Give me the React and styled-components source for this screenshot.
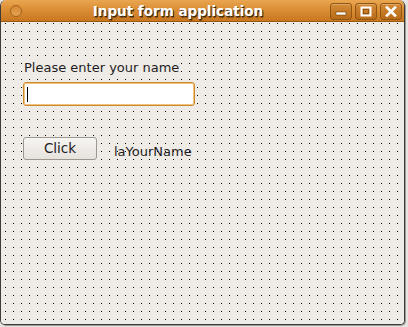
import React from 'react';
import styled, { createGlobalStyle } from 'styled-components';

const GlobalStyle = createGlobalStyle`
  html, body {
    margin: 0;
    padding: 0;
    background: #e6e4e1;
    width: 408px;
    height: 327px;
    overflow: hidden;
  }
  * {
    box-sizing: border-box;
  }
`;

const Window = styled.div`
  width: 405px;
  height: 325px;
  display: flex;
  flex-direction: column;
  border: 1px solid #3c3b37;
  border-top: none;
  border-radius: 6px 6px 5px 5px;
  overflow: hidden;
  background: #efebe7;
  box-shadow: 1px 1px 0 #9c9a96;
`;

const TitleBar = styled.div`
  height: 22px;
  flex-shrink: 0;
  display: flex;
  align-items: center;
  padding: 0 2px 0 9px;
  background: linear-gradient(#e9a650 0%, #dd9138 40%, #c8771f 100%);
  border-bottom: 1px solid #9a5a12;
  font-family: "DejaVu Sans", sans-serif;
`;

const MenuCircle = styled.div`
  width: 12px;
  height: 12px;
  border-radius: 50%;
  border: 1px solid #a0631d;
  background: linear-gradient(#d48a34, #e6a253);
  margin-top: 1px;
`;

const Title = styled.div`
  flex: 1;
  text-align: center;
  color: #ffffff;
  font-weight: bold;
  font-size: 13.5px;
  padding-left: 4px;
  text-shadow: 1px 1px 0 #3f2a10, 1px 2px 1px rgba(0, 0, 0, 0.4);
`;

const Controls = styled.div`
  display: flex;
  gap: 3px;
`;

const ControlButton = styled.div`
  width: 22px;
  height: 17px;
  border: 1px solid #8f5513;
  border-radius: 3px;
  background: linear-gradient(#d48b36, #b86b18);
  box-shadow: inset 0 1px 0 rgba(255, 255, 255, 0.25);
  display: flex;
  align-items: center;
  justify-content: center;
  margin-top: 1px;
`;

const Canvas = styled.div`
  flex: 1;
  display: flex;
  flex-direction: column;
  align-items: flex-start;
  padding: 38px 0 0 22px;
  background-color: #efebe7;
  background-image: conic-gradient(from 270deg at 1px 1px, #000 90deg, transparent 0);
  background-size: 8px 8px;
  background-position: 4px 1px;
  font-family: "DejaVu Sans", sans-serif;
  font-size: 13px;
  color: #1e1e1e;
`;

const FieldLabel = styled.div`
  line-height: 16px;
  padding: 0 1px;
  background: #efebe7;
`;

const TextInput = styled.div`
  margin-top: 6px;
  width: 172px;
  height: 24px;
  border: 1px solid #d1892d;
  border-radius: 3px;
  background: #ffffff;
  box-shadow: inset 0 0 0 1px #f0c27f;
  display: flex;
  align-items: center;
  padding-left: 3px;
`;

const Caret = styled.div`
  width: 1px;
  height: 15px;
  background: #000;
`;

const ActionRow = styled.div`
  margin-top: 31px;
  display: flex;
  align-items: center;
  gap: 17px;
`;

const PushButton = styled.div`
  width: 74px;
  height: 23px;
  border: 1px solid #9c9890;
  border-radius: 3px;
  background: linear-gradient(#f7f5f3, #e6e2dc);
  display: flex;
  align-items: center;
  justify-content: center;
  color: #1e1e1e;
  font-size: 13.5px;
  padding-bottom: 2px;
`;

const ResultLabel = styled.div`
  line-height: 16px;
  padding-top: 6px;
`;

const MinIcon = () => (
  <svg width="12" height="10" viewBox="0 0 12 10">
    <rect x="1" y="6" width="10" height="3" fill="#fff" stroke="#6b3c08" strokeWidth="0.6" />
  </svg>
);

const MaxIcon = () => (
  <svg width="12" height="11" viewBox="0 0 12 11">
    <rect x="1.5" y="1.5" width="9" height="8" fill="none" stroke="#fff" strokeWidth="2" />
    <rect x="3.5" y="3.5" width="5" height="4" fill="none" stroke="#6b3c08" strokeWidth="0.6" />
  </svg>
);

const CloseIcon = () => (
  <svg width="12" height="11" viewBox="0 0 12 11">
    <path d="M2 1.5 L10 9.5 M10 1.5 L2 9.5" stroke="#fff" strokeWidth="2.6" strokeLinecap="square" />
  </svg>
);

const App = () => {
  return (
    <>
      <GlobalStyle />
      <Window>
        <TitleBar>
          <MenuCircle />
          <Title>Input form application</Title>
          <Controls>
            <ControlButton><MinIcon /></ControlButton>
            <ControlButton><MaxIcon /></ControlButton>
            <ControlButton><CloseIcon /></ControlButton>
          </Controls>
        </TitleBar>
        <Canvas>
          <FieldLabel>Please enter your name</FieldLabel>
          <TextInput>
            <Caret />
          </TextInput>
          <ActionRow>
            <PushButton>Click</PushButton>
            <ResultLabel>laYourName</ResultLabel>
          </ActionRow>
        </Canvas>
      </Window>
    </>
  );
};

export default App;
